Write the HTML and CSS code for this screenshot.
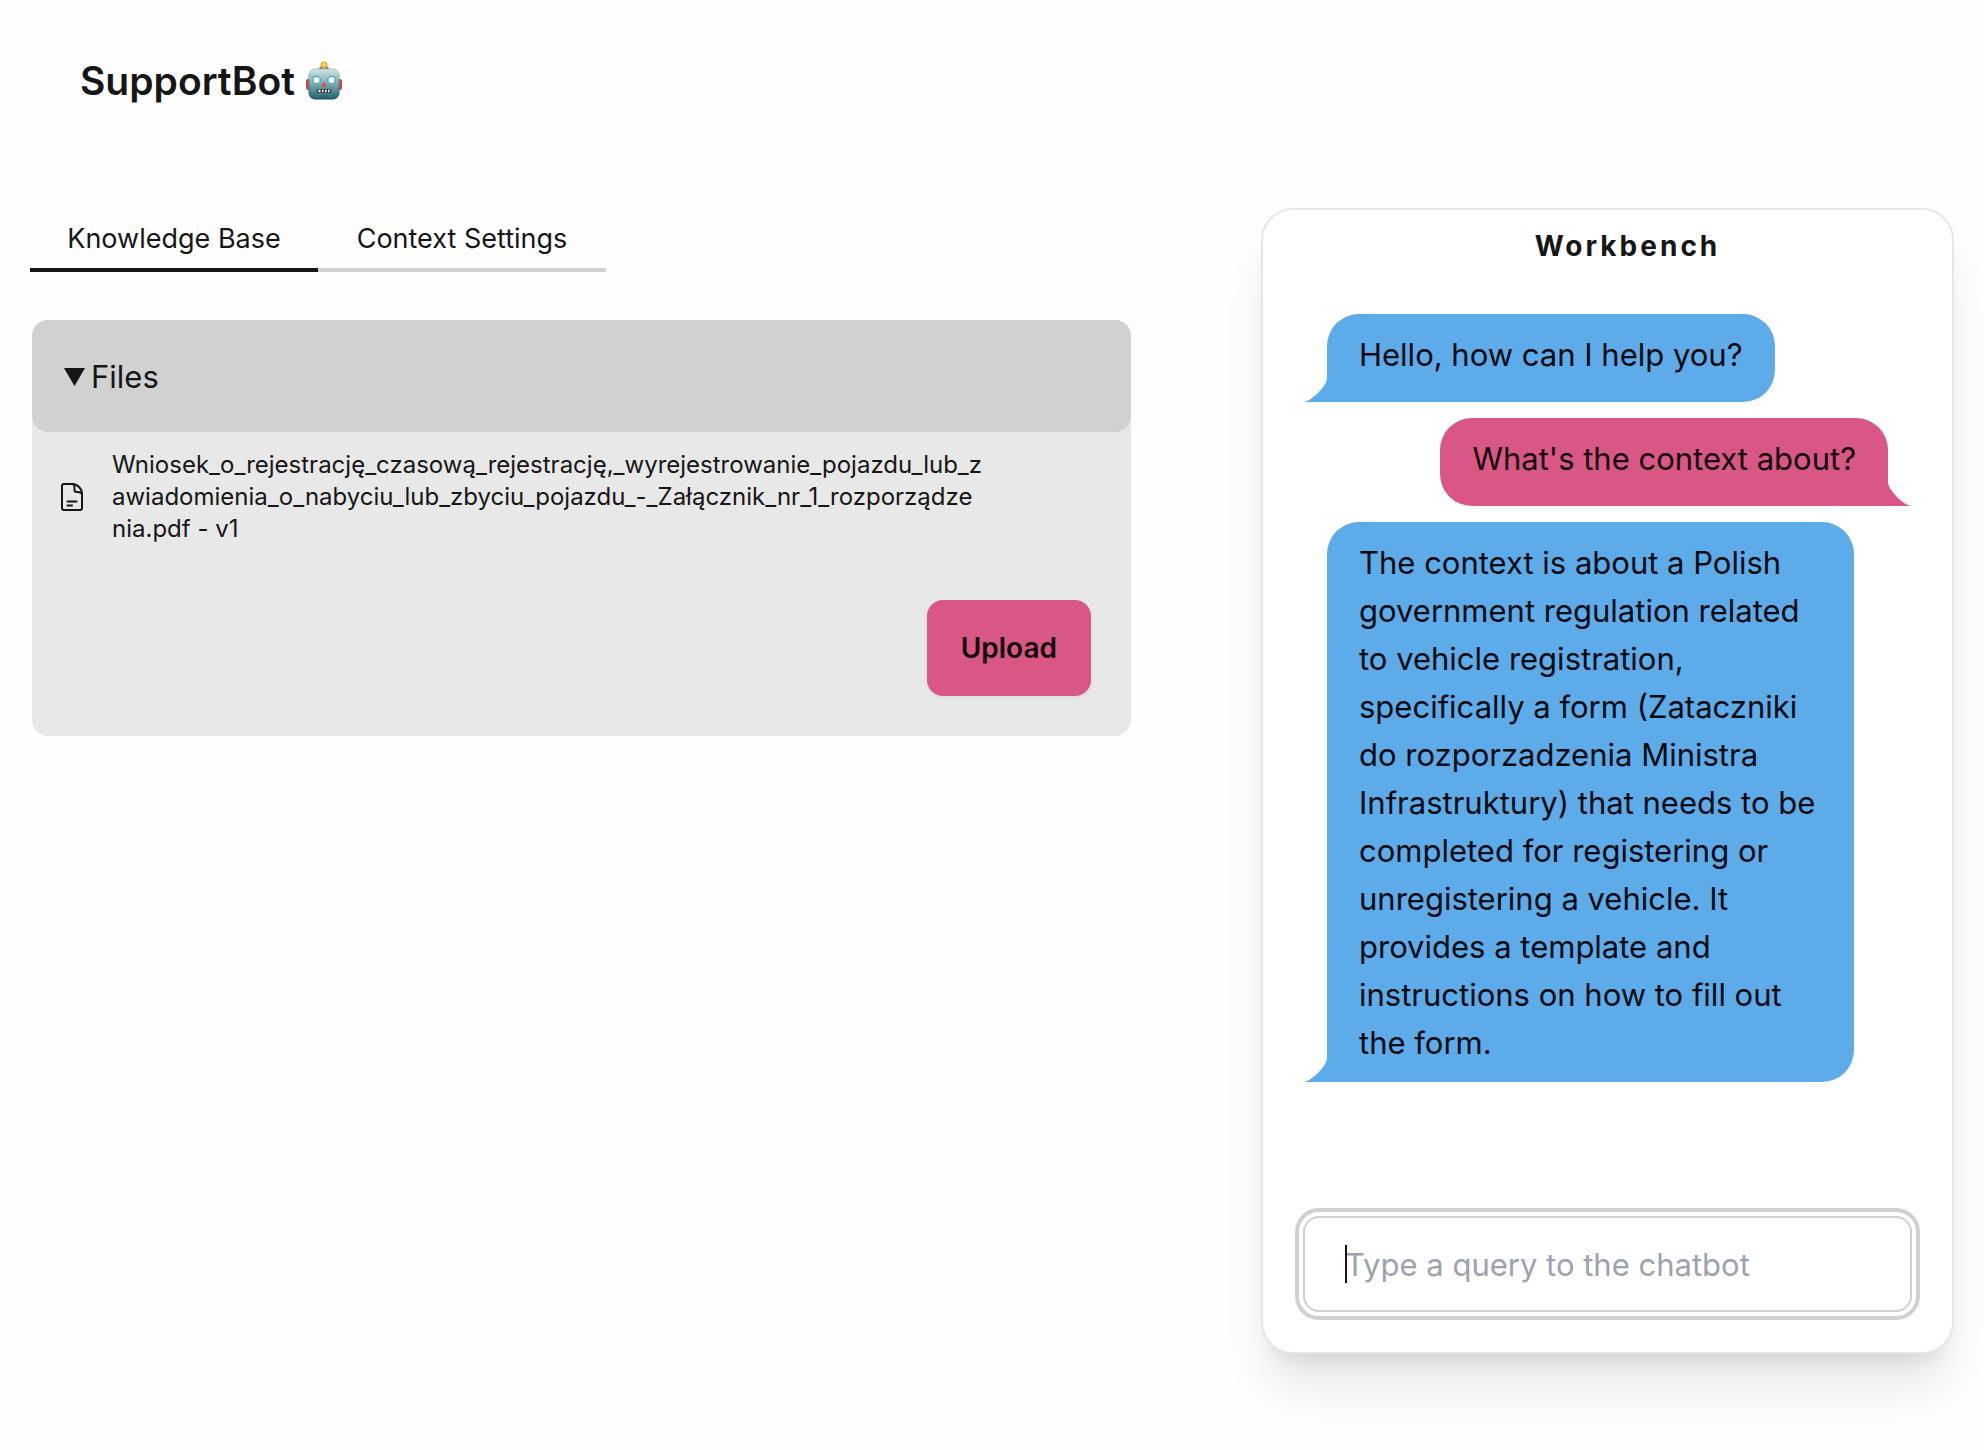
FILE: index.html
```html
<!DOCTYPE html>
<html lang="en">
<head>
  <meta charset="utf-8">
  <meta name="viewport" content="width=device-width, initial-scale=1">
  <title>SupportBot</title>
  <link rel="stylesheet" href="styles.css">
</head>
<body>
  <header class="page-header">
    <h1 class="brand">SupportBot
      <svg class="brand-icon" viewBox="0 0 38 40" aria-hidden="true">
        <defs>
          <linearGradient id="face" x1="0" y1="0" x2="0" y2="1">
            <stop offset="0" stop-color="#d3e6e3"/>
            <stop offset="0.45" stop-color="#83b0b6"/>
            <stop offset="1" stop-color="#1f6173"/>
          </linearGradient>
          <linearGradient id="edge" x1="0" y1="0" x2="0" y2="1">
            <stop offset="0" stop-color="#a9c4c1"/>
            <stop offset="1" stop-color="#174c5c"/>
          </linearGradient>
        </defs>
        <rect x="1" y="18" width="5" height="11" rx="2" fill="#c4473c"/>
        <rect x="32" y="18" width="5" height="11" rx="2" fill="#c4473c"/>
        <path d="M14 9c0-3 2-4 5-4s5 1 5 4z" fill="#5a4a8c"/>
        <circle cx="19" cy="4" r="3.5" fill="#f5a623"/>
        <circle cx="19" cy="3.4" r="1.7" fill="#ffe27a"/>
        <rect x="4" y="8" width="30" height="30" rx="6" fill="url(#face)" stroke="url(#edge)"/>
        <circle cx="11.500" cy="19" r="4.600" fill="#4eaed2"/>
        <circle cx="26.500" cy="19" r="4.600" fill="#4eaed2"/>
        <circle cx="11.500" cy="19" r="3" fill="#fff"/>
        <circle cx="26.500" cy="19" r="3" fill="#fff"/>
        <path d="M19 20l3 6h-6z" fill="#d5584b"/>
        <rect x="12" y="28" width="14" height="4" rx="1.500" fill="#2c3b40"/>
        <path d="M13.500 30h2M17 30h1.500M20 30h1.500M23 30h1.500" stroke="#fff" stroke-width="2.400"/>
      </svg>
    </h1>
  </header>

  <main class="layout">
    <section class="knowledge">
      <div class="tabs" role="tablist">
        <button class="tab tab-active" type="button" role="tab" aria-selected="true">Knowledge Base</button>
        <button class="tab" type="button" role="tab" aria-selected="false">Context Settings</button>
      </div>

      <details class="files" open>
        <summary class="files-header">
          <svg class="files-marker" viewBox="0 0 21 18" aria-hidden="true"><path d="M0 0h21L10.500 18z" fill="currentColor"/></svg>
          Files
        </summary>
        <div class="files-body">
          <div class="file-row">
            <svg class="file-icon" viewBox="0 0 22 28" fill="none" stroke="currentColor" stroke-width="2" stroke-linecap="round" stroke-linejoin="round" aria-hidden="true">
              <path d="M12 1H3a2 2 0 0 0-2 2v22a2 2 0 0 0 2 2h16a2 2 0 0 0 2-2V11A10 10 0 0 0 11 1"/>
              <path d="M12 1c1.300 1 1.500 2 1.500 3.500V7A2 2 0 0 0 15.500 9H17c2 0 3 .500 4 2"/>
              <path d="M6.500 18.500h9M6.500 22.500h4.500"/>
            </svg>
            <p class="file-name">Wniosek_o_rejestrację_czasową_rejestrację,_wyrejestrowanie_pojazdu_lub_zawiadomienia_o_nabyciu_lub_zbyciu_pojazdu_-_Załącznik_nr_1_rozporządzenia.pdf - v1</p>
          </div>
          <button class="upload" type="button">Upload</button>
        </div>
      </details>
    </section>

    <section class="workbench">
      <h2 class="workbench-title">Workbench</h2>
      <div class="chat">
        <p class="bubble bubble-bot">Hello, how can I help you?</p>
        <p class="bubble bubble-user">What's the context about?</p>
        <p class="bubble bubble-bot">The context is about a Polish government regulation related to vehicle registration, specifically a form (Zataczniki do rozporzadzenia Ministra Infrastruktury) that needs to be completed for registering or unregistering a vehicle. It provides a template and instructions on how to fill out the form.</p>
      </div>
      <form class="query">
        <input class="query-input" type="text" placeholder="Type a query to the chatbot" aria-label="Type a query to the chatbot">
        <span class="query-caret"></span>
      </form>
    </section>
  </main>
</body>
</html>
```
FILE: styles.css
```css
*,
*::before,
*::after {
  box-sizing: border-box;
}

body {
  margin: 0;
  background: #fefefe;
  color: #161616;
  font-family: Inter, "Liberation Sans", sans-serif;
  font-size: 31px;
  line-height: 48px;
}

h1,
h2,
p {
  margin: 0;
}

button,
input {
  font-family: inherit;
  color: inherit;
}

.page-header {
  height: 208px;
  padding: 53px 80px 0;
}

.brand {
  display: flex;
  align-items: center;
  gap: 10px;
  font-size: 39px;
  line-height: 56px;
  font-weight: 600;
}

.brand-icon {
  width: 38px;
  height: 40px;
}

.layout {
  display: grid;
  grid-template-columns: minmax(0, 1101fr) minmax(0, 693fr);
  gap: 130px;
  padding: 0 30px 96px;
}

.tabs {
  display: grid;
  grid-template-columns: 288px 288px;
}

.tab {
  height: 64px;
  padding: 0;
  border: 0;
  border-bottom: 4px solid #d1d1d1;
  background: none;
  font-size: 27px;
}

.tab-active {
  border-bottom-color: #161616;
}

.files {
  margin: 48px 0 0 2px;
  border-radius: 16px;
  background: #e8e8e8;
}

.files-header {
  display: flex;
  align-items: center;
  gap: 6px;
  height: 112px;
  padding: 2px 32px 0;
  border-radius: 16px;
  background: #d1d1d1;
  list-style: none;
}

.files-marker {
  width: 21px;
  height: 18px;
}

.files-body {
  display: flex;
  flex-direction: column;
  padding: 17px 40px 40px 28px;
}

.file-row {
  display: flex;
  align-items: center;
  gap: 28px;
}

.file-icon {
  flex: none;
  width: 24px;
  height: 28px;
}

.file-name {
  width: 872px;
  font-size: 24px;
  line-height: 32px;
  word-break: break-all;
}

.upload {
  align-self: flex-end;
  height: 96px;
  margin-top: 55px;
  padding: 0 34px;
  border: 0;
  border-radius: 16px;
  background: #d95787;
  color: #130409;
  font-size: 28px;
  font-weight: 600;
  box-shadow: 0 2px 4px rgba(0, 0, 0, 0.06);
}

.workbench {
  display: flex;
  flex-direction: column;
  min-height: calc(100vh - 304px);
  padding: 14px 40px 40px;
  border: 2px solid #e5e6eb;
  border-radius: 32px;
  background: #fff;
  box-shadow: 0 40px 50px -10px rgba(0, 0, 0, 0.1), 0 16px 20px -12px rgba(0, 0, 0, 0.1);
}

.workbench-title {
  padding-left: 40px;
  font-size: 28px;
  line-height: 44px;
  font-weight: 700;
  letter-spacing: 3px;
  text-align: center;
}

.chat {
  display: flex;
  flex: 1;
  flex-direction: column;
  gap: 16px;
  padding: 46px 24px 48px;
}

.bubble {
  position: relative;
  max-width: 94%;
  min-height: 88px;
  padding: 17px 32px 15px;
  border-radius: 32px;
}

.bubble::before {
  content: "";
  position: absolute;
  bottom: 0;
  width: 24px;
  height: 24px;
  background: inherit;
}

.bubble-bot {
  align-self: flex-start;
  border-bottom-left-radius: 0;
  background: #5dabe9;
  color: #020a10;
}

.bubble-bot::before {
  right: 100%;
  clip-path: path("M0 24H24V0C24 8 8 24 0 24Z");
}

.bubble-user {
  align-self: flex-end;
  border-bottom-right-radius: 0;
  background: #d95787;
  color: #130409;
}

.bubble-user::before {
  left: 100%;
  clip-path: path("M24 24H0V0C0 8 16 24 24 24Z");
}

.query {
  position: relative;
}

.query-input {
  display: block;
  width: 100%;
  height: 96px;
  padding: 0 40px;
  border: 2px solid #d0d0d0;
  border-radius: 16px;
  outline: 4px solid #d0d0d0;
  outline-offset: 4px;
  background: #fff;
  font-size: 31px;
}

.query-input::placeholder {
  color: #9ca3af;
  opacity: 1;
}

.query-caret {
  position: absolute;
  top: 29px;
  left: 42px;
  width: 2px;
  height: 38px;
  background: #161616;
}
```
